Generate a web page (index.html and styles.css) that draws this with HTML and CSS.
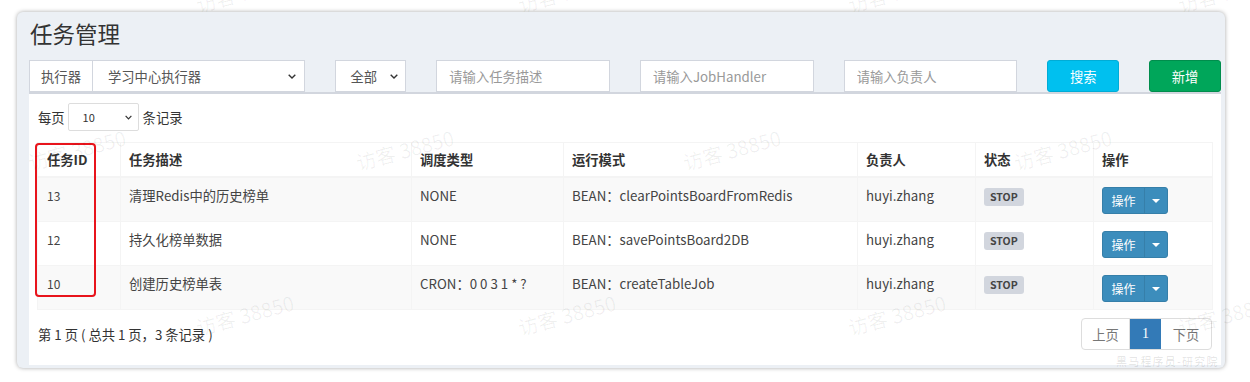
FILE: index.html
```html
<!DOCTYPE html>
<html lang="zh-CN">
<head>
<meta charset="utf-8">
<title>任务管理</title>
<link rel="stylesheet" href="styles.css">
</head>
<body>
<div class="page">
  <div class="card">
    <h1 class="title">任务管理</h1>
    <div class="filters">
      <div class="group span3">
        <span class="addon">执行器</span>
        <div class="select grow"><span>学习中心执行器</span><svg class="chev" viewBox="0 0 8 5" width="8" height="5"><path d="M0.7 0.7 L4 4 L7.3 0.7" fill="none" stroke="#333" stroke-width="1.4"/></svg></div>
      </div>
      <div class="select span1 all"><span>全部</span><svg class="chev" viewBox="0 0 8 5" width="8" height="5"><path d="M0.7 0.7 L4 4 L7.3 0.7" fill="none" stroke="#333" stroke-width="1.4"/></svg></div>
      <input class="input span2" type="text" placeholder="请输入任务描述">
      <input class="input span2" type="text" placeholder="请输入JobHandler">
      <input class="input span2" type="text" placeholder="请输入负责人">
      <button class="btn btn-search" type="button">搜索</button>
      <button class="btn btn-add" type="button">新增</button>
    </div>
    <div class="box">
      <div class="length">
        <span>每页</span>
        <div class="select small"><span>10</span><svg class="chev" viewBox="0 0 8 5" width="7" height="5"><path d="M0.7 0.7 L4 4 L7.3 0.7" fill="none" stroke="#333" stroke-width="1.4"/></svg></div>
        <span>条记录</span>
      </div>
      <div class="table-wrap">
        <table class="grid">
          <colgroup>
            <col class="c-id"><col class="c-desc"><col class="c-type"><col class="c-mode"><col class="c-owner"><col class="c-state"><col class="c-op">
          </colgroup>
          <thead>
            <tr><th>任务ID</th><th>任务描述</th><th>调度类型</th><th>运行模式</th><th>负责人</th><th>状态</th><th>操作</th></tr>
          </thead>
          <tbody>
            <tr class="odd">
              <td class="id">13</td><td>清理Redis中的历史榜单</td><td>NONE</td><td>BEAN：clearPointsBoardFromRedis</td><td>huyi.zhang</td>
              <td><span class="label">STOP</span></td>
              <td><span class="btn-group"><span class="op">操作</span><span class="caret-btn"><svg viewBox="0 0 8 4" width="8" height="4"><path d="M0 0 H8 L4 4 Z" fill="#fff"/></svg></span></span></td>
            </tr>
            <tr>
              <td class="id">12</td><td>持久化榜单数据</td><td>NONE</td><td>BEAN：savePointsBoard2DB</td><td>huyi.zhang</td>
              <td><span class="label">STOP</span></td>
              <td><span class="btn-group"><span class="op">操作</span><span class="caret-btn"><svg viewBox="0 0 8 4" width="8" height="4"><path d="M0 0 H8 L4 4 Z" fill="#fff"/></svg></span></span></td>
            </tr>
            <tr class="odd">
              <td class="id">10</td><td>创建历史榜单表</td><td>CRON：0 0 3 1 * ?</td><td>BEAN：createTableJob</td><td>huyi.zhang</td>
              <td><span class="label">STOP</span></td>
              <td><span class="btn-group"><span class="op">操作</span><span class="caret-btn"><svg viewBox="0 0 8 4" width="8" height="4"><path d="M0 0 H8 L4 4 Z" fill="#fff"/></svg></span></span></td>
            </tr>
          </tbody>
        </table>
        <div class="highlight"></div>
      </div>
      <div class="footer">
        <span class="info">第 1 页 ( 总共 1 页，3 条记录 )</span>
        <div class="pager">
          <span class="pg disabled">上页</span><span class="pg active">1</span><span class="pg disabled">下页</span>
        </div>
      </div>
    </div>
  </div>
</div>
<div class="wm-layer">
  <span class="wm" style="left:195px;top:-20px">访客 38850</span>
  <span class="wm" style="left:517px;top:-20px">访客 38850</span>
  <span class="wm" style="left:847px;top:-20px">访客 38850</span>
  <span class="wm" style="left:1177px;top:-20px">访客 38850</span>
  <span class="wm" style="left:27px;top:138px">访客 38850</span>
  <span class="wm" style="left:355px;top:138px">访客 38850</span>
  <span class="wm" style="left:682px;top:138px">访客 38850</span>
  <span class="wm" style="left:1013px;top:138px">访客 38850</span>
  <span class="wm" style="left:195px;top:303px">访客 38850</span>
  <span class="wm" style="left:517px;top:303px">访客 38850</span>
  <span class="wm" style="left:847px;top:303px">访客 38850</span>
  <span class="wm" style="left:1177px;top:303px">访客 38850</span>
  <span class="brand">黑马程序员-研究院</span>
</div>
</body>
</html>
```
FILE: styles.css
```css
* { box-sizing: border-box; }
html, body { margin: 0; padding: 0; background: #fff; }
body {
  font-family: "Noto Sans CJK SC", "Source Sans Pro", sans-serif;
  font-size: 13.3px;
  color: #333;
  width: 1250px;
  height: 382px;
  overflow: hidden;
  position: relative;
}
.page { padding: 12px 0 0 17px; }
.card {
  width: 1208px;
  background: #ecf0f5;
  border-radius: 6px;
  box-shadow: 0 0 4px rgba(0,0,0,0.35);
  padding: 6px 4px 3px 12px;
}
.title {
  margin: 0 0 0 1px;
  font-size: 22.5px;
  font-weight: normal;
  line-height: 30px;
  color: #333;
}
.filters {
  margin-top: 12px;
  display: grid;
  grid-template-columns: repeat(12, 1fr);
  column-gap: 30px;
  height: 32px;
}
.span3 { grid-column: span 3; }
.span2 { grid-column: span 2; }
.span1 { grid-column: span 1; }
.group { display: flex; height: 32px; }
.addon {
  width: 64px;
  flex: none;
  border: 1px solid #d2d6de;
  background: #fff;
  color: #555;
  display: flex;
  align-items: center;
  justify-content: center;
}
.select {
  display: flex;
  align-items: center;
  background: #fff;
  border: 1px solid #d2d6de;
  color: #555;
  height: 32px;
}
.select .chev { margin-left: auto; flex: none; }
.select.grow { flex: 1; border-left: none; padding: 0 8px 0 15px; }
.select.all { padding: 0 7px 0 15px; }
.input {
  height: 32px;
  border: 1px solid #d2d6de;
  background: #fff;
  padding: 0 12px;
  font-family: inherit;
  font-size: 13.3px;
  color: #555;
  outline: none;
  border-radius: 0;
  width: 100%;
  min-width: 0;
}
.input::placeholder { color: #999; }
.btn {
  height: 32px;
  border-radius: 3px;
  border: 1px solid transparent;
  color: #fff;
  font-family: inherit;
  font-size: 13.3px;
  padding: 0;
  cursor: pointer;
}
.btn-search { background: #00c0ef; border-color: #00acd6; }
.btn-add { background: #00a65a; border-color: #008d4c; }

.box {
  background: #fff;
  border-top: 2px solid #d2d6de;
  padding: 9px 9px 15px 8px;
}
.length {
  display: flex;
  align-items: center;
  height: 28px;
  padding-left: 1px;
}
.select.small {
  width: 71px;
  height: 28px;
  margin: 0 4px 0 3px;
  border-color: #ddd;
  border-radius: 2px;
  font-size: 11px;
  color: #333;
  padding: 0 6px 0 14px;
}
.table-wrap { position: relative; margin-top: 11px; }
.grid {
  width: 1175px;
  border-collapse: collapse;
  table-layout: fixed;
  border: 1px solid #f4f4f4;
}
.c-id { width: 83px; }
.c-desc { width: 291px; }
.c-type { width: 152px; }
.c-mode { width: 294px; }
.c-owner { width: 118px; }
.c-state { width: 118px; }
.c-op { width: 119px; }
.grid th, .grid td {
  border: 1px solid #f4f4f4;
  text-align: left;
  vertical-align: top;
  line-height: 20px;
  white-space: nowrap;
}
.grid th {
  padding: 7px 8px 6px;
  border-bottom-width: 2px;
  font-weight: bold;
  color: #333;
}
.grid th:first-child { padding-left: 9px; }
.grid td { padding: 8px 8px 7px; color: #444; }
.grid td.id { padding-left: 9px; font-size: 12px; }
.grid tr.odd td { background: #f9f9f9; }
.label {
  display: inline-block;
  margin-top: 2px;
  height: 18px;
  line-height: 18px;
  padding: 0 6px;
  border-radius: 3px;
  background: #d2d6de;
  color: #444;
  font-size: 10.5px;
  font-weight: bold;
  vertical-align: top;
}
.btn-group {
  display: inline-flex;
  margin-top: 1px;
  height: 27px;
  vertical-align: top;
  border-radius: 3px;
  overflow: hidden;
  background: #3c8dbc;
  border: 1px solid #367fa9;
}
.op {
  width: 42px;
  display: flex;
  align-items: center;
  justify-content: center;
  color: #fff;
  font-size: 12px;
  border-right: 1px solid #367fa9;
}
.caret-btn {
  width: 22px;
  display: flex;
  align-items: center;
  justify-content: center;
}
.highlight {
  position: absolute;
  left: -2px;
  top: 1px;
  width: 61px;
  height: 154px;
  border: 2px solid #e8141c;
  border-radius: 4px;
  pointer-events: none;
}
.footer {
  margin-top: 8px;
  display: flex;
  align-items: center;
  justify-content: space-between;
}
.info { padding-left: 1px; color: #333; }
.pager {
  display: flex;
  height: 32px;
  border: 1px solid #ddd;
  border-radius: 4px;
  overflow: hidden;
}
.pg {
  display: flex;
  align-items: center;
  justify-content: center;
  height: 30px;
  color: #777;
  font-size: 13.3px;
}
.pg:first-child { width: 48px; border-right: 1px solid #ddd; }
.pg:last-child { width: 50px; }
.pg.active {
  width: 31px;
  background: #337ab7;
  color: #fff;
  font-family: "Liberation Serif", serif;
  font-size: 14px;
}
.wm-layer {
  position: absolute;
  left: 0;
  top: 0;
  width: 1250px;
  height: 382px;
  pointer-events: none;
  overflow: hidden;
}
.wm {
  position: absolute;
  font-size: 20px;
  line-height: 24px;
  white-space: nowrap;
  color: rgba(0,0,0,0.06);
  transform: rotate(-15deg);
  transform-origin: center;
}
.brand {
  position: absolute;
  left: 1116px;
  top: 354px;
  font-size: 11px;
  letter-spacing: 1.2px;
  color: rgba(0,0,0,0.12);
  line-height: 14px;
}
```
